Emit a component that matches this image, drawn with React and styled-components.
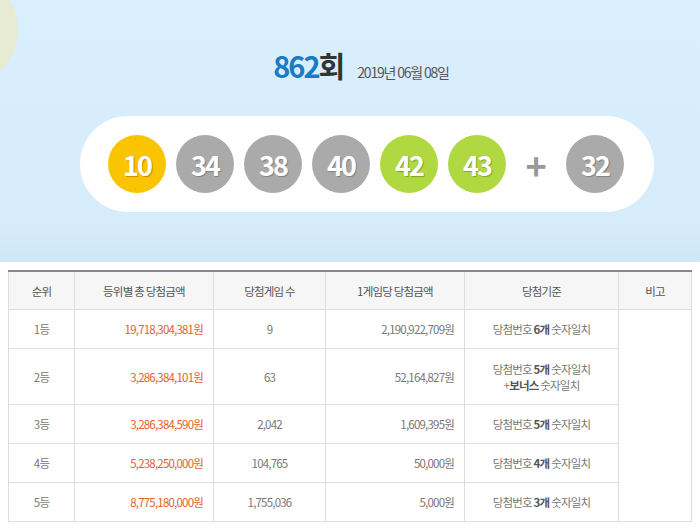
import React from "react";
import styled, { createGlobalStyle } from "styled-components";

const Global = createGlobalStyle`
  body { margin: 0; background: #fff; font-family: "Noto Sans CJK KR", "Noto Sans", sans-serif; }
`;

const Hero = styled.div`
  position: relative;
  height: 262px;
  background: linear-gradient(#d9effd, #d6ecfb 85%, #cfe6f8);
  overflow: hidden;
  display: flex;
  flex-direction: column;
  align-items: center;
  padding-top: 44px;
  box-sizing: border-box;
`;

const Deco = styled.div`
  position: absolute;
  left: -64px;
  top: -20px;
  width: 82px;
  height: 100px;
  border-radius: 50%;
  background: #e6ebd2;
`;

const TitleRow = styled.div`
  display: flex;
  align-items: baseline;
  gap: 14px;
  margin-left: 22px;
`;

const Round = styled.h1`
  margin: 0;
  font-size: 29px;
  font-weight: 700;
  letter-spacing: -2px;
  color: #333;
  span { color: #1a7bc5; }
`;

const DateText = styled.span`
  font-size: 14px;
  color: #555;
  letter-spacing: -1.2px;
`;

const Pill = styled.div`
  margin-top: 30px;
  width: 574px;
  height: 96px;
  border-radius: 48px;
  background: #fff;
  display: flex;
  align-items: center;
  padding-left: 28px;
  box-sizing: border-box;
  gap: 10px;
  align-self: flex-start;
  margin-left: 80px;
`;

const Ball = styled.div`
  width: 58px;
  height: 58px;
  border-radius: 50%;
  background: ${p => p.$c};
  color: #fff;
  font-size: 27px;
  font-weight: 700;
  letter-spacing: -2px;
  display: flex;
  align-items: center;
  justify-content: center;
  text-shadow: 1px 1px 1px rgba(0,0,0,0.25);
`;

const Plus = styled.div`
  width: 40px;
  text-align: center;
  font-size: 36px;
  line-height: 1;
  color: #999;
  font-weight: 700;
`;

const Table = styled.table`
  margin: 8px 8px 0;
  width: 684px;
  border-collapse: collapse;
  border-top: 2px solid #888;
  font-size: 11.5px;
  letter-spacing: -0.8px;
  color: #777;
  th, td { border: 1px solid #ddd; padding: 0 10px; }
  th { background: #f6f6f6; color: #555; font-weight: 400; height: 37px; }
  td { height: 38px; text-align: center; }
`;

const Num = styled.td`
  && { text-align: right; color: ${p => (p.$o ? "#e4602f" : "#777")}; }
`;

const Crit = styled.td`
  b { color: #555; font-weight: 700; }
`;

const balls = [
  [10, "#fbc400"], [34, "#aaa"], [38, "#aaa"], [40, "#aaa"], [42, "#b0d840"], [43, "#b0d840"],
];

const rows = [
  ["1등", "19,718,304,381원", "9", "2,190,922,709원", "6"],
  ["2등", "3,286,384,101원", "63", "52,164,827원", "5", true],
  ["3등", "3,286,384,590원", "2,042", "1,609,395원", "5"],
  ["4등", "5,238,250,000원", "104,765", "50,000원", "4"],
  ["5등", "8,775,180,000원", "1,755,036", "5,000원", "3"],
];

export default function App() {
  return (
    <>
      <Global />
      <Hero>
        <Deco />
        <TitleRow>
          <Round><span>862</span>회</Round>
          <DateText>2019년 06월 08일</DateText>
        </TitleRow>
        <Pill>
          {balls.map(([n, c]) => <Ball key={n} $c={c}>{n}</Ball>)}
          <Plus>+</Plus>
          <Ball $c="#aaa">32</Ball>
        </Pill>
      </Hero>
      <Table>
        <thead>
          <tr>
            <th style={{ width: 45 }}>순위</th>
            <th style={{ width: 118 }}>등위별 총 당첨금액</th>
            <th style={{ width: 91 }}>당첨게임 수</th>
            <th style={{ width: 118 }}>1게임당 당첨금액</th>
            <th style={{ width: 133 }}>당첨기준</th>
            <th>비고</th>
          </tr>
        </thead>
        <tbody>
          {rows.map((r, i) => (
            <tr key={r[0]} style={r[5] ? { height: 56 } : undefined}>
              <td>{r[0]}</td>
              <Num $o>{r[1]}</Num>
              <td>{r[2]}</td>
              <Num>{r[3]}</Num>
              <Crit>
                당첨번호 <b>{r[4]}개</b> 숫자일치
                {r[5] && <><br />+<b>보너스</b> 숫자일치</>}
              </Crit>
              {i === 0 && <td rowSpan={5} />}
            </tr>
          ))}
        </tbody>
      </Table>
    </>
  );
}
